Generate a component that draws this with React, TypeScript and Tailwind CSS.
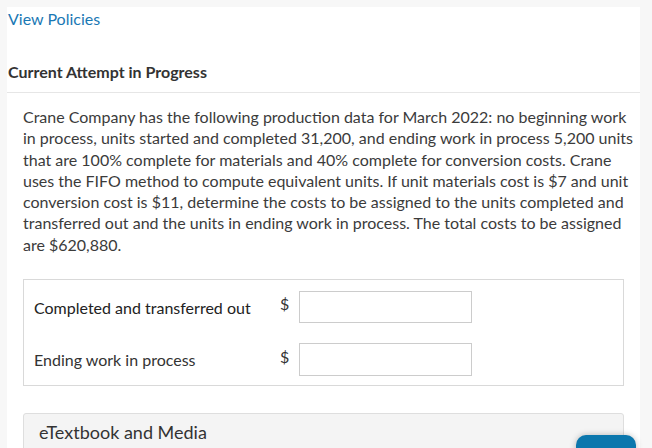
import React from "react";

export default function App() {
  return (
    <div
      className="relative w-[652px] h-[448px] overflow-hidden bg-[#f7f7f7] pt-[7px] pl-[7px] pr-[12px]"
      style={{ fontFamily: "Lato, 'Noto Sans', sans-serif" }}
    >
      <div className="bg-white h-[441px]">
        <div className="pl-[1px] pt-[1px] text-[16px] leading-[21px] text-[#1a78b4]">View Policies</div>
        <div className="mt-[32px] pl-[1px] text-[16px] leading-[21px] font-bold text-[#333333] pb-[10px] border-b border-[#e6e6e6]">
          Current Attempt in Progress
        </div>
        <div className="px-[16px] pt-[13px]">
          <p className="w-[610px] text-[16px] leading-[21.3px] text-[#3b3b3b]">
            Crane Company has the following production data for March 2022: no beginning work in process, units
            started and completed 31,200, and ending work in process 5,200 units that are 100% complete for
            materials and 40% complete for conversion costs. Crane uses the FIFO method to compute equivalent
            units. If unit materials cost is $7 and unit conversion cost is $11, determine the costs to be assigned
            to the units completed and transferred out and the units in ending work in process. The total costs to
            be assigned are $620,880.
          </p>
          <div className="mt-[24px] border border-[#d9d9d9] pl-[10px] pt-[11px] pb-[9px] flex flex-col gap-[20px]">
            <div className="flex items-center">
              <div className="w-[246px] text-[16px] text-[#222222] pt-[1px]">Completed and transferred out</div>
              <div className="text-[16px] text-[#333333] w-[19px] -mt-[6px]">$</div>
              <div className="w-[173px] h-[32px] border border-[#cccccc] bg-white"></div>
            </div>
            <div className="flex items-center">
              <div className="w-[246px] text-[16px] text-[#333333] pt-[1px]">Ending work in process</div>
              <div className="text-[16px] text-[#333333] w-[19px] -mt-[6px]">$</div>
              <div className="w-[173px] h-[33px] border border-[#cccccc] bg-white"></div>
            </div>
          </div>
          <div className="mt-[27px] border border-[#dedede] bg-[#f4f4f4] rounded-t-[3px] h-[60px] pl-[15px] pt-[7px]">
            <div className="text-[18px] leading-[22px] text-[#333333]">eTextbook and Media</div>
          </div>
        </div>
      </div>
      <div className="absolute left-[576px] top-[435px] w-[60px] h-[30px] rounded-[10px] bg-[#0b77ad] shadow-[0_0_6px_rgba(0,0,0,0.25)]"></div>
    </div>
  );
}
